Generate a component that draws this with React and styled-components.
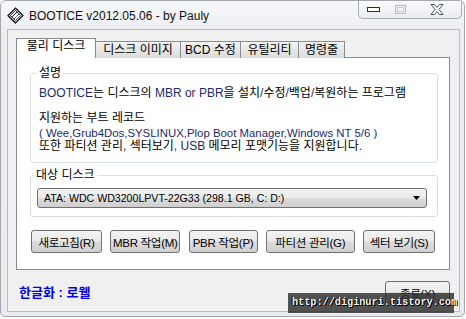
import styled, { createGlobalStyle } from "styled-components"

const GlobalStyle = createGlobalStyle`
  html, body { margin:0; padding:0; background:#ffffff; }
  body {
    width:466px; height:319px; overflow:hidden;
    font-family:"Liberation Sans","Noto Sans CJK KR",sans-serif;
    font-size:12px; color:#000;
  }
`

const KR = `"Liberation Sans","Noto Sans CJK KR",sans-serif`

const Window = styled.div`
  position:relative;
  width:465px; height:317px; box-sizing:border-box;
  display:flex; flex-direction:column;
  background:linear-gradient(#f7f8fa, #eceef1 28px, #e9ebee);
  border:1px solid #a3a8ae;
  border-radius:6px 6px 5px 5px;
  overflow:hidden;
`

const TitleBar = styled.div`
  height:28px; flex:none;
  display:flex; align-items:flex-start;
  padding-left:6px;
`

const AppIcon = styled.svg`
  width:17px; height:17px; margin-top:6px; flex:none;
`

const Title = styled.div`
  margin:7px 0 0 5px;
  font-size:12px; line-height:16px; color:#111;
`

const CaptionGroup = styled.div`
  margin-left:auto; margin-right:2px;
  width:104px; height:18px; box-sizing:border-box;
  display:flex;
  border:1px solid #a6acb3; border-top:none;
  border-radius:0 0 5px 5px;
  background:linear-gradient(#fbfbfc, #e9ecef);
`

const CaptionButton = styled.div`
  width:${p => p.$w}px; height:100%;
  display:flex; align-items:center; justify-content:center;
`

const Client = styled.div`
  flex:1;
  margin:0 4px 4px 6px;
  border:1px solid #b7bcc2;
  background:#f0f0f0;
  display:flex; flex-direction:column;
  padding:8px 9px 0 8px;
`

const TabStrip = styled.div`
  display:flex; align-items:flex-end;
  height:20px; margin-bottom:-1px;
  position:relative; z-index:1;
`

const Tab = styled.div`
  width:${p => p.$w}px; box-sizing:border-box;
  margin-left:${p => (p.$first ? 0 : -1)}px;
  height:${p => (p.$active ? 20 : 17)}px;
  border:1px solid #898c95; border-bottom:none;
  background:${p => (p.$active ? "#ffffff" : "linear-gradient(#f3f3f3, #e6e6e6 50%, #dcdcdc)")};
  font-family:${KR}; font-size:12px;
  line-height:${p => (p.$active ? 15 : 16)}px;
  text-align:center; white-space:nowrap;
  position:relative; z-index:${p => (p.$active ? 2 : 1)};
`

const Panel = styled.div`
  height:213px; box-sizing:border-box;
  background:#ffffff;
  border:1px solid #898c95;
  padding:8px 11px 0 13px;
  display:flex; flex-direction:column;
`

const Group = styled.fieldset`
  margin:${p => p.$mt || 0}px 0 0 0;
  border:1px solid #d5dfe5; border-radius:3px;
  padding:0 ${p => p.$pr}px ${p => p.$pb}px ${p => p.$pl}px;
  min-width:0;
`

const Legend = styled.legend`
  font-family:${KR}; font-size:12px; line-height:14px;
  padding:0 2px; margin-left:${p => p.$ml}px;
  color:#000;
`

const Line = styled.div`
  font-family:${KR};
  font-size:${p => p.$fs || 12}px;
  line-height:${p => p.$lh}px;
  margin-top:${p => p.$mt || 0}px;
  white-space:nowrap;
  color:${p => p.$color || "#000"};
`

const Lat = styled.span`
  color:#1c2a6c;
`

const Combo = styled.div`
  height:20px; box-sizing:border-box;
  margin-top:6px;
  border:1px solid #707070; border-radius:3px;
  background:linear-gradient(#f2f2f2, #ebebeb 50%, #dddddd 50%, #cfcfcf);
  display:flex; align-items:center;
  padding:0 6px;
  font-size:10.6px; white-space:nowrap;
`

const ComboArrow = styled.svg`
  margin-left:auto; width:7px; height:4px;
`

const ButtonRow = styled.div`
  display:flex; justify-content:space-between;
  margin:13px 3px 0 1px;
`

const Button = styled.div`
  width:${p => p.$w}px; height:23px; box-sizing:border-box;
  border:1px solid #707070; border-radius:3px;
  background:linear-gradient(#f2f2f2, #ebebeb 50%, #dddddd 50%, #cfcfcf);
  display:flex; align-items:center; justify-content:center;
  font-family:${KR}; font-size:11.5px; letter-spacing:-0.3px; white-space:nowrap;
  color:#000;
`

const Footer = styled.div`
  display:flex; align-items:center; justify-content:space-between;
  padding-top:11px;
`

const Credit = styled.div`
  margin-left:3px; margin-top:-3px;
  font-family:${KR}; font-size:13px; font-weight:700;
  color:#0000ee;
`

const Watermark = styled.div`
  position:absolute; left:287px; top:292px;
  width:166px; height:20px; box-sizing:border-box;
  background:rgba(45,45,45,0.82);
  padding-left:4px;
  font-family:"Liberation Mono",monospace; font-size:10.2px; font-weight:700;
  line-height:20px; color:#f2f2f2;
  text-shadow:1px 1px 0 #000, -1px 0 0 #000;
  white-space:nowrap;
`

const tabs = [
  { label: "물리 디스크", w: 80, active: true },
  { label: "디스크 이미지", w: 86 },
  { label: "BCD 수정", w: 61 },
  { label: "유틸리티", w: 59 },
  { label: "명령줄", w: 47 },
]

const buttons = [
  { label: "새로고침(R)", w: 71 },
  { label: "MBR 작업(M)", w: 70 },
  { label: "PBR 작업(P)", w: 69 },
  { label: "파티션 관리(G)", w: 89 },
  { label: "섹터 보기(S)", w: 72 },
]

const DiskIcon = () => (
  <AppIcon viewBox="0 0 17 17">
    <polygon points="8.5,1 16,8.5 8.5,16 1,8.5" fill="#cfd2d6" stroke="#1a1a1a" strokeWidth="1.2" />
    <polygon points="8.5,3.5 13.5,8.5 8.5,13.5 3.5,8.5" fill="#f4f4f4" stroke="#333" strokeWidth="0.9" />
    <line x1="5" y1="10" x2="10" y2="5" stroke="#222" strokeWidth="1" />
    <line x1="7" y1="12" x2="12" y2="7" stroke="#555" strokeWidth="0.8" />
    <polygon points="1,8.5 8.5,16 8.5,17 0.5,9" fill="#222" />
  </AppIcon>
)

export default function App() {
  return (
    <>
      <GlobalStyle />
      <Window>
        <TitleBar>
          <DiskIcon />
          <Title>BOOTICE v2012.05.06 - by Pauly</Title>
          <CaptionGroup>
            <CaptionButton $w={28}>
              <svg width="13" height="5" viewBox="0 0 13 5">
                <rect x="0.5" y="0.5" width="12" height="4" fill="#fff" stroke="#2b2f36" />
              </svg>
            </CaptionButton>
            <CaptionButton $w={26}>
              <svg width="11" height="9" viewBox="0 0 11 9">
                <rect x="0.5" y="0.5" width="10" height="8" fill="none" stroke="#b4b8be" />
                <rect x="2.5" y="2.5" width="6" height="4" fill="none" stroke="#c6c9cd" />
              </svg>
            </CaptionButton>
            <CaptionButton $w={48}>
              <svg width="14" height="11" viewBox="0 0 14 11">
                <path d="M1 0.5 H4.5 L7 3.5 L9.5 0.5 H13 L9 5.5 L13 10.5 H9.5 L7 7.5 L4.5 10.5 H1 L5 5.5 Z"
                  fill="#fff" stroke="#3a3f46" strokeWidth="0.9" strokeLinejoin="round" />
              </svg>
            </CaptionButton>
          </CaptionGroup>
        </TitleBar>

        <Client>
          <TabStrip>
            {tabs.map((t, i) => (
              <Tab key={t.label} $w={t.w} $active={t.active} $first={i === 0}>{t.label}</Tab>
            ))}
          </TabStrip>
          <Panel>
            <Group $pl={8} $pr={8} $pb={10}>
              <Legend $ml={-2}>설명</Legend>
              <Line $lh={14} $mt={6}>
                <Lat>BOOTICE</Lat>는 디스크의 <Lat>MBR or PBR</Lat>을 설치<Lat>/</Lat>수정<Lat>/</Lat>백업<Lat>/</Lat>복원하는 프로그램
              </Line>
              <Line $lh={15} $mt={11}>지원하는 부트 레코드</Line>
              <Line $lh={14} $fs={11.4} $color="#1c2a6c">( Wee,Grub4Dos,SYSLINUX,Plop Boot Manager,Windows NT 5/6 )</Line>
              <Line $lh={12}>
                또한 파티션 관리<Lat>,</Lat> 섹터보기<Lat>,</Lat> <Lat>USB</Lat> 메모리 포맷기능을 지원합니다<Lat>.</Lat>
              </Line>
            </Group>
            <Group $mt={5} $pl={6} $pr={10} $pb={8}>
              <Legend $ml={-3}>대상 디스크</Legend>
              <Combo>
                ATA: WDC WD3200LPVT-22G33 (298.1 GB, C: D:)
                <ComboArrow viewBox="0 0 7 4">
                  <polygon points="0,0 7,0 3.5,4" fill="#000" />
                </ComboArrow>
              </Combo>
            </Group>
            <ButtonRow>
              {buttons.map(b => (
                <Button key={b.label} $w={b.w}>{b.label}</Button>
              ))}
            </ButtonRow>
          </Panel>
          <Footer>
            <Credit>한글화 : 로웰</Credit>
            <Button $w={65}>종료(X)</Button>
          </Footer>
        </Client>
        <Watermark>http://diginuri.tistory.com</Watermark>
      </Window>
    </>
  )
}
